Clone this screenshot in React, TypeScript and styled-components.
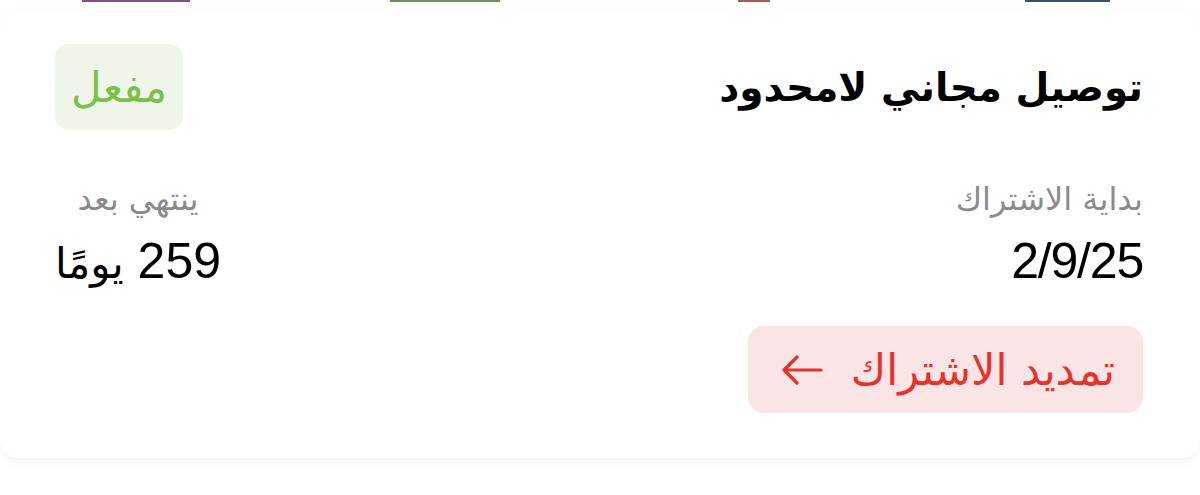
import React from "react";
import styled, { createGlobalStyle } from "styled-components";

const Global = createGlobalStyle`
  html, body { margin: 0; padding: 0; background: #ffffff; }
  body { font-family: "Liberation Sans", "DejaVu Sans", sans-serif; }
`;

const Page = styled.div`
  width: 1200px;
  height: 495px;
  overflow: hidden;
  background: #ffffff;
  position: relative;
`;

const LogoStrip = styled.div`
  display: flex;
  height: 3px;
  margin-top: -1px;
`;

const LogoBit = styled.div<{ $w: number; $ml: number; $c: string }>`
  width: ${(p) => p.$w}px;
  margin-left: ${(p) => p.$ml}px;
  height: 3px;
  background: ${(p) => p.$c};
`;

const Card = styled.section`
  direction: rtl;
  margin-top: 8px;
  height: 448px;
  box-sizing: border-box;
  background: #ffffff;
  border-radius: 18px;
  box-shadow: 0 4px 10px rgba(40, 60, 110, 0.06), 0 0 2px rgba(0, 0, 0, 0.04);
  padding: 34px 57px 0 55px;
  display: flex;
  flex-direction: column;
`;

const Header = styled.div`
  display: flex;
  justify-content: space-between;
  align-items: center;
`;

const Title = styled.h2`
  margin: 0;
  font-family: "DejaVu Sans", sans-serif;
  font-weight: bold;
  font-size: 39px;
  color: #000000;
`;

const Badge = styled.div`
  width: 128px;
  height: 86px;
  border-radius: 14px;
  background: #eff6e9;
  color: #7cc04a;
  display: flex;
  align-items: center;
  justify-content: center;
  font-family: "DejaVu Sans", sans-serif;
  font-size: 42px;
`;

const InfoRow = styled.div`
  display: flex;
  justify-content: space-between;
  margin-top: 48px;
`;

const InfoCol = styled.div<{ $align: string }>`
  display: flex;
  flex-direction: column;
  align-items: ${(p) => p.$align};
  gap: 16px;
`;

const Label = styled.div`
  font-family: "DejaVu Sans", sans-serif;
  font-size: 32px;
  color: #8a8a8e;
  line-height: 42px;
`;

const Value = styled.div`
  font-family: "Liberation Sans", "DejaVu Sans", sans-serif;
  font-size: 50px;
  letter-spacing: -1.2px;
  color: #000000;
  line-height: 50px;
`;

const Unit = styled.span`
  font-family: "DejaVu Sans", sans-serif;
  font-size: 42px;
  letter-spacing: 0;
`;

const Action = styled.button`
  align-self: flex-start;
  margin-top: 37px;
  height: 87px;
  width: 395px;
  border: none;
  border-radius: 16px;
  background: #fbe4e5;
  color: #e5332c;
  display: flex;
  align-items: center;
  gap: 28px;
  padding: 0 28px 0 0;
  font-family: "DejaVu Sans", sans-serif;
  font-size: 43px;
  cursor: pointer;
`;

export default function App() {
  return (
    <Page>
      <Global />
      <LogoStrip>
        <LogoBit $w={108} $ml={82} $c="#8a4a8c" />
        <LogoBit $w={110} $ml={200} $c="#6f8f5a" />
        <LogoBit $w={32} $ml={238} $c="#a85a55" />
        <LogoBit $w={85} $ml={255} $c="#3a4e78" />
      </LogoStrip>
      <Card>
        <Header>
          <Title>توصيل مجاني لامحدود</Title>
          <Badge>مفعل</Badge>
        </Header>
        <InfoRow>
          <InfoCol $align="flex-start">
            <Label>بداية الاشتراك</Label>
            <Value>2/9/25</Value>
          </InfoCol>
          <InfoCol $align="center">
            <Label>ينتهي بعد</Label>
            <Value>
              259 <Unit>يومًا</Unit>
            </Value>
          </InfoCol>
        </InfoRow>
        <Action>
          <span>تمديد الاشتراك</span>
          <svg width="42" height="30" viewBox="0 0 42 30" fill="none">
            <path d="M40 15H3M16 2L3 15l13 13" stroke="#e5332c" strokeWidth="3.2" strokeLinecap="round" strokeLinejoin="round" />
          </svg>
        </Action>
      </Card>
    </Page>
  );
}
